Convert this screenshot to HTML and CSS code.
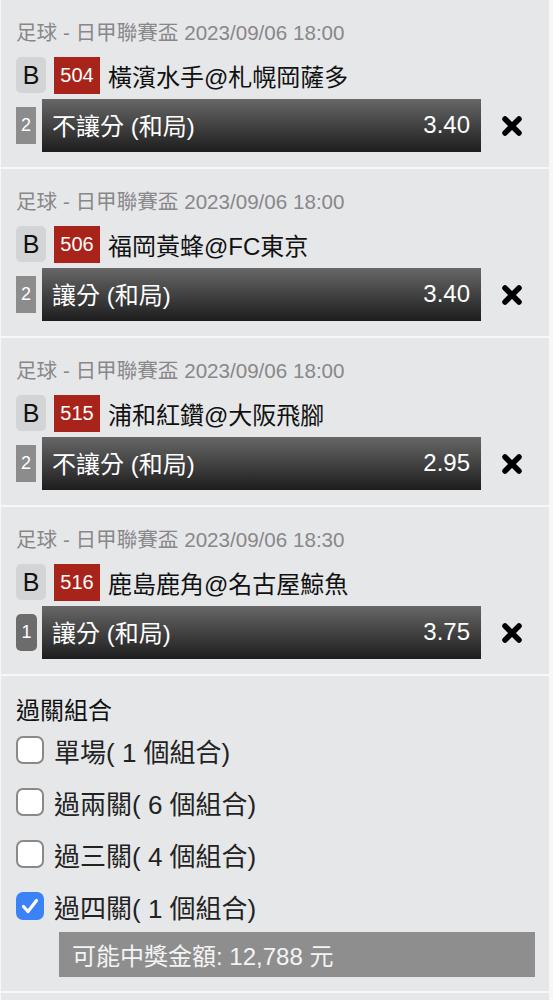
FILE: index.html
```html
<!DOCTYPE html>
<html lang="zh-Hant">
<head>
<meta charset="utf-8">
<title>投注單</title>
<link rel="stylesheet" href="styles.css">
</head>
<body>
<div class="list">
  <section class="card bet">
    <div class="meta">足球 - 日甲聯賽盃 2023/09/06 18:00</div>
    <div class="match">
      <span class="tag-b">B</span>
      <span class="tag-no">504</span>
      <span class="teams">橫濱水手@札幌岡薩多</span>
    </div>
    <div class="pick">
      <span class="num">2</span>
      <div class="bar"><span>不讓分 (和局)</span><span>3.40</span></div>
      <svg class="remove" viewBox="0 0 24 24" aria-label="移除"><path d="M5 5L19 19M19 5L5 19"/></svg>
    </div>
  </section>
  <section class="card bet">
    <div class="meta">足球 - 日甲聯賽盃 2023/09/06 18:00</div>
    <div class="match">
      <span class="tag-b">B</span>
      <span class="tag-no">506</span>
      <span class="teams">福岡黃蜂@FC東京</span>
    </div>
    <div class="pick">
      <span class="num">2</span>
      <div class="bar"><span>讓分 (和局)</span><span>3.40</span></div>
      <svg class="remove" viewBox="0 0 24 24" aria-label="移除"><path d="M5 5L19 19M19 5L5 19"/></svg>
    </div>
  </section>
  <section class="card bet">
    <div class="meta">足球 - 日甲聯賽盃 2023/09/06 18:00</div>
    <div class="match">
      <span class="tag-b">B</span>
      <span class="tag-no">515</span>
      <span class="teams">浦和紅鑽@大阪飛腳</span>
    </div>
    <div class="pick">
      <span class="num">2</span>
      <div class="bar"><span>不讓分 (和局)</span><span>2.95</span></div>
      <svg class="remove" viewBox="0 0 24 24" aria-label="移除"><path d="M5 5L19 19M19 5L5 19"/></svg>
    </div>
  </section>
  <section class="card bet">
    <div class="meta">足球 - 日甲聯賽盃 2023/09/06 18:30</div>
    <div class="match">
      <span class="tag-b">B</span>
      <span class="tag-no">516</span>
      <span class="teams">鹿島鹿角@名古屋鯨魚</span>
    </div>
    <div class="pick">
      <span class="num num-dark">1</span>
      <div class="bar"><span>讓分 (和局)</span><span>3.75</span></div>
      <svg class="remove" viewBox="0 0 24 24" aria-label="移除"><path d="M5 5L19 19M19 5L5 19"/></svg>
    </div>
  </section>
  <section class="card combo">
    <div class="combo-title">過關組合</div>
    <label class="opt"><span class="box"></span><span>單場( 1 個組合)</span></label>
    <label class="opt"><span class="box"></span><span>過兩關( 6 個組合)</span></label>
    <label class="opt"><span class="box"></span><span>過三關( 4 個組合)</span></label>
    <label class="opt"><span class="box box-on"><svg viewBox="0 0 28 28"><path d="M7.5 14.5L12 19.5L20.5 8.5"/></svg></span><span>過四關( 1 個組合)</span></label>
    <div class="payout">可能中獎金額: 12,788 元</div>
  </section>
  <section class="card tail"></section>
</div>
</body>
</html>
```

FILE: styles.css
```css
html, body {
  margin: 0;
  padding: 0;
  background: #f7f7f8;
}
body {
  font-family: "Liberation Sans", "Noto Sans CJK TC", sans-serif;
  color: #151515;
}
.list {
  display: flex;
  flex-direction: column;
  gap: 2px;
  padding: 0 4px 0 1px;
}
.card {
  background: #e6e7e9;
  padding-left: 15px;
}
.bet {
  height: 167px;
  box-sizing: border-box;
  padding-top: 21px;
}
.meta {
  font-size: 20.6px;
  line-height: 24px;
  color: #88888a;
  white-space: nowrap;
}
.match {
  display: flex;
  align-items: center;
  margin-top: 12px;
  height: 36px;
}
.tag-b {
  width: 30px;
  height: 36px;
  border-radius: 5px;
  background: #d3d4d6;
  display: flex;
  align-items: center;
  justify-content: center;
  font-size: 25px;
  color: #111;
}
.tag-no {
  margin-left: 8px;
  width: 46px;
  height: 37px;
  background: #a8241b;
  color: #fff;
  font-size: 20px;
  display: flex;
  align-items: center;
  justify-content: center;
  margin-top: 1px;
}
.teams {
  margin-left: 8px;
  font-size: 24px;
  color: #111;
  white-space: nowrap;
}
.pick {
  display: flex;
  align-items: center;
  margin-top: 6px;
}
.num {
  width: 20px;
  height: 37px;
  background: #8c8c8c;
  color: #fff;
  font-size: 18px;
  display: flex;
  align-items: center;
  justify-content: center;
  margin-right: 6px;
}
.num-dark {
  background: #6c6c6c;
  border-radius: 5px;
  width: 21px;
  margin-right: 5px;
}
.bar {
  width: 439px;
  height: 53px;
  box-sizing: border-box;
  display: flex;
  align-items: center;
  justify-content: space-between;
  padding: 0 11px 2px 10px;
  background: linear-gradient(#676767, #1d1d1d);
  color: #fff;
  font-size: 24px;
}
.remove {
  width: 24px;
  height: 24px;
  margin-left: 19px;
  fill: none;
  stroke: #000;
  stroke-width: 5.5;
  stroke-linecap: round;
}
.combo {
  padding-top: 21px;
  padding-bottom: 14px;
}
.combo-title {
  font-size: 24px;
  line-height: 27px;
  color: #111;
}
.opt {
  display: flex;
  align-items: center;
  height: 52px;
  font-size: 26px;
  color: #222;
}
.box {
  width: 28px;
  height: 28px;
  box-sizing: border-box;
  border: 2.5px solid #898989;
  border-radius: 7px;
  background: #fff;
  margin-right: 10px;
  flex: none;
}
.box-on {
  background: #3a82f6;
  border-color: #3a82f6;
  display: flex;
}
.box-on svg {
  width: 28px;
  height: 28px;
  margin: -2.5px;
  fill: none;
  stroke: #fff;
  stroke-width: 3.2;
  stroke-linecap: round;
  stroke-linejoin: round;
}
.payout {
  margin-left: 43px;
  width: 476px;
  height: 45px;
  box-sizing: border-box;
  padding-left: 13px;
  display: flex;
  align-items: center;
  background: #8e8e8e;
  color: #f4f4f4;
  font-size: 24px;
}
.tail {
  height: 20px;
}
```
